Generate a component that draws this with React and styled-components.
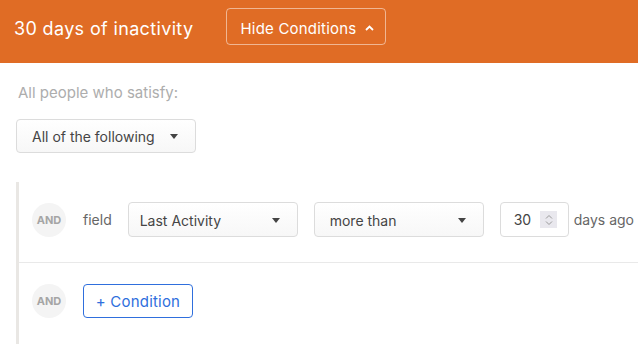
import React from "react";
import styled, { createGlobalStyle } from "styled-components";

const Global = createGlobalStyle`
  html, body { margin: 0; padding: 0; background: #fff; }
  body { font-family: Inter, "Liberation Sans", sans-serif; -webkit-font-smoothing: antialiased; }
  * { box-sizing: border-box; }
`;

const Header = styled.div`
  height: 63px;
  background: #e06c25;
  display: flex;
  align-items: flex-start;
  padding: 8px 0 0 14px;
  gap: 33px;
`;

const Title = styled.h1`
  margin: 2px 0 0;
  font-size: 18px;
  font-weight: 400;
  color: #fff;
  line-height: 37px;
  letter-spacing: 0.35px;
`;

const HeaderButton = styled.button`
  height: 37px;
  width: 160px;
  border: 1px solid rgba(255, 255, 255, 0.5);
  border-radius: 4px;
  background: transparent;
  color: #fff;
  font-family: inherit;
  font-size: 15px;
  letter-spacing: 0.2px;
  display: flex;
  align-items: center;
  justify-content: center;
  gap: 9px;
  padding: 3px 0 0 2px;
`;

const Body = styled.div`
  padding: 20px 0 0 16px;
`;

const Label = styled.div`
  color: #adadad;
  font-size: 15px;
  line-height: 18px;
  margin-left: 2px;
  padding-top: 1px;
`;

const Select = styled.div`
  width: ${(p) => p.$w}px;
  height: ${(p) => p.$h || 35}px;
  margin-left: ${(p) => p.$ml || 0}px;
  border: 1px solid #dcdcdc;
  border-radius: 4px;
  background: linear-gradient(#fff, #f7f7f7);
  display: flex;
  align-items: center;
  justify-content: space-between;
  padding: 1px 17px 0 ${(p) => p.$pl || 15}px;
  font-size: 14px;
  color: #454545;
  flex-shrink: 0;
`;

const Caret = () => (
  <svg width="8" height="5" viewBox="0 0 8 5">
    <path d="M0 0h8L4 5z" fill="#444" />
  </svg>
);

const Top = styled.div`
  margin-top: 17px;
`;

const Group = styled.div`
  margin-top: 29px;
  border-left: 3px solid #e9e7e4;
`;

const Row = styled.div`
  height: ${(p) => p.$h}px;
  display: flex;
  align-items: center;
  padding: 0 0 5px 13px;
  border-bottom: ${(p) => (p.$line ? "1px solid #e9e9e9" : "none")};
`;

const And = styled.div`
  width: 34px;
  height: 34px;
  border-radius: 50%;
  background: #f4f4f4;
  color: #a5a5a5;
  font-size: 11px;
  font-weight: 700;
  display: flex;
  align-items: center;
  justify-content: center;
  flex-shrink: 0;
  margin-right: 17px;
`;

const Word = styled.span`
  font-size: 14px;
  color: #666;
  margin-right: ${(p) => p.$mr || 0}px;
  white-space: nowrap;
`;

const NumberBox = styled.div`
  width: 69px;
  height: 35px;
  border: 1px solid #dcdcdc;
  border-radius: 4px;
  display: flex;
  align-items: center;
  padding-left: 13px;
  font-size: 14px;
  color: #444;
  margin: 0 5px 0 16px;
  flex-shrink: 0;
`;

const Spin = styled.div`
  width: 17px;
  height: 17px;
  background: #e9e8ee;
  margin-left: 9px;
  display: flex;
  align-items: center;
  justify-content: center;
`;

const AddButton = styled.button`
  height: 34px;
  width: 110px;
  border: 1px solid #2f6fdd;
  border-radius: 4px;
  background: #fff;
  color: #2f6fdd;
  font-family: inherit;
  font-size: 15px;
  letter-spacing: 0.2px;
  padding: 0;
`;

export default function App() {
  return (
    <>
      <Global />
      <Header>
        <Title>30 days of inactivity</Title>
        <HeaderButton>
          Hide Conditions
          <svg width="9" height="6" viewBox="0 0 9 6">
            <path d="M1 5l3.5-3.5L8 5" stroke="#fff" strokeWidth="1.8" fill="none" />
          </svg>
        </HeaderButton>
      </Header>
      <Body>
        <Label>All people who satisfy:</Label>
        <Top>
          <Select $w={180} $h={34}>
            All of the following <Caret />
          </Select>
        </Top>
        <Group>
          <Row $h={81} $line>
            <And>AND</And>
            <Word $mr={16}>field</Word>
            <Select $w={170} $pl={11}>
              Last Activity <Caret />
            </Select>
            <Select $w={170} $ml={16}>
              more than <Caret />
            </Select>
            <NumberBox>
              30
              <Spin>
                <svg width="8" height="12" viewBox="0 0 8 12">
                  <path d="M1 4.5L4 1.5l3 3M1 7.5l3 3 3-3" stroke="#999" strokeWidth="1" fill="none" />
                </svg>
              </Spin>
            </NumberBox>
            <Word>days ago</Word>
          </Row>
          <Row $h={81}>
            <And>AND</And>
            <AddButton>+ Condition</AddButton>
          </Row>
        </Group>
      </Body>
    </>
  );
}
